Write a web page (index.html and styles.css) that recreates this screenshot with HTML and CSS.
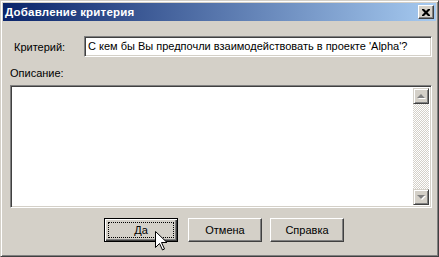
FILE: index.html
```html
<!DOCTYPE html>
<html>
  <head>
    <meta charset="utf-8">
    <link rel="stylesheet" href="styles.css">
  </head>
  <body>
    <div class="window">
      <div class="titlebar">
        <span class="title">Добавление критерия</span>
        <span class="close">
          <svg width="8" height="7" viewBox="0 0 8 7"><path d="M0 0h2l2 2 2-2h2v1l-2.5 2.5 2.5 2.5v1h-2l-2-2-2 2h-2v-1l2.5-2.5-2.5-2.5z" fill="#000"/></svg>
        </span>
      </div>
      <div class="content">
        <div class="row">
          <label class="lbl">Критерий:</label>
          <div class="field">С кем бы Вы предпочли взаимодействовать в проекте 'Alpha'?</div>
        </div>
        <div class="caption">Описание:</div>
        <div class="memo">
          <div class="memo-text"></div>
          <div class="vscroll">
            <div class="sbtn"><span class="arrow up"></span></div>
            <div class="track"></div>
            <div class="sbtn"><span class="arrow down"></span></div>
          </div>
        </div>
        <div class="buttons">
          <div class="btn default"><span class="focus">Да</span></div>
          <div class="btn b2">Отмена</div>
          <div class="btn b3">Справка</div>
        </div>
      </div>
      <svg class="cursor" width="13" height="21" viewBox="0 0 13 21">
        <path d="M0.5 0.5v16l4-4 3 6.5 2-1-3-6.5h5.5z" fill="#fff" stroke="#000" stroke-linejoin="miter"/>
      </svg>
    </div>
  </body>
</html>
```

FILE: styles.css
```css
body {
  margin: 0;
  padding: 0;
  font-family: "Liberation Sans", Arial, sans-serif;
  font-size: 11px;
  color: #000;
}
.window {
  position: relative;
  box-sizing: border-box;
  width: 439px;
  height: 257px;
  background: #d4d0c8;
  border: 1px solid;
  border-color: #d4d0c8 #404040 #404040 #d4d0c8;
  box-shadow: inset 1px 1px #fff, inset -1px -1px #808080;
  padding: 2px;
}
.titlebar {
  display: flex;
  align-items: center;
  height: 18px;
  padding-left: 2px;
  background: linear-gradient(to right, #0a246a, #a6caf0);
}
.title {
  color: #fff;
  font-weight: bold;
  font-size: 11.5px;
  letter-spacing: 0.2px;
}
.close {
  display: flex;
  align-items: center;
  justify-content: center;
  box-sizing: border-box;
  width: 16px;
  height: 14px;
  margin-left: auto;
  margin-right: 2px;
  background: #d4d0c8;
  border: 1px solid;
  border-color: #fff #404040 #404040 #fff;
  box-shadow: inset -1px -1px #808080;
}
.content {
  padding: 15px 4px 0 7px;
}
.row {
  display: flex;
  align-items: center;
  height: 21px;
}
.lbl {
  width: 70px;
  padding-left: 4px;
}
.field,
.memo {
  box-sizing: border-box;
  background: #fff;
  border: 1px solid;
  border-color: #808080 #fff #fff #808080;
  box-shadow: inset 1px 1px #404040, inset -1px -1px #d4d0c8;
}
.field {
  flex: 1;
  height: 21px;
  line-height: 19px;
  padding: 0 3px;
  white-space: nowrap;
  overflow: hidden;
}
.caption {
  margin-top: 10px;
  line-height: 13px;
  height: 13px;
}
.memo {
  display: flex;
  margin-top: 5px;
  height: 123px;
  padding: 2px;
}
.memo-text {
  flex: 1;
}
.vscroll {
  display: flex;
  flex-direction: column;
  width: 16px;
}
.track {
  flex: 1;
  background: conic-gradient(#fff 25%, #d4d0c8 0 50%, #fff 0 75%, #d4d0c8 0) 0 0 / 2px 2px;
}
.sbtn {
  display: flex;
  align-items: center;
  justify-content: center;
  box-sizing: border-box;
  height: 16px;
  background: #d4d0c8;
  border: 1px solid;
  border-color: #d4d0c8 #404040 #404040 #d4d0c8;
  box-shadow: inset 1px 1px #fff, inset -1px -1px #808080;
}
.arrow {
  width: 0;
  height: 0;
  border-left: 4px solid transparent;
  border-right: 4px solid transparent;
  filter: drop-shadow(1px 1px 0 #fff);
}
.arrow.up {
  border-bottom: 4px solid #808080;
}
.arrow.down {
  border-top: 4px solid #808080;
}
.buttons {
  display: flex;
  margin-top: 10px;
  padding-left: 94px;
}
.btn {
  display: flex;
  align-items: center;
  justify-content: center;
  box-sizing: border-box;
  width: 74px;
  height: 24px;
  border: 1px solid;
  border-color: #fff #404040 #404040 #fff;
  box-shadow: inset -1px -1px #808080;
}
.btn.default {
  border: 1px solid #000;
  box-shadow: inset 1px 1px #fff, inset -1px -1px #404040, inset -2px -2px #808080;
}
.focus {
  display: flex;
  align-items: center;
  justify-content: center;
  width: 64px;
  height: 14px;
  border: 1px dotted #000;
}
.b2 {
  margin-left: 10px;
}
.b3 {
  margin-left: 8px;
}
.cursor {
  position: absolute;
  left: 154px;
  top: 230px;
}
```
